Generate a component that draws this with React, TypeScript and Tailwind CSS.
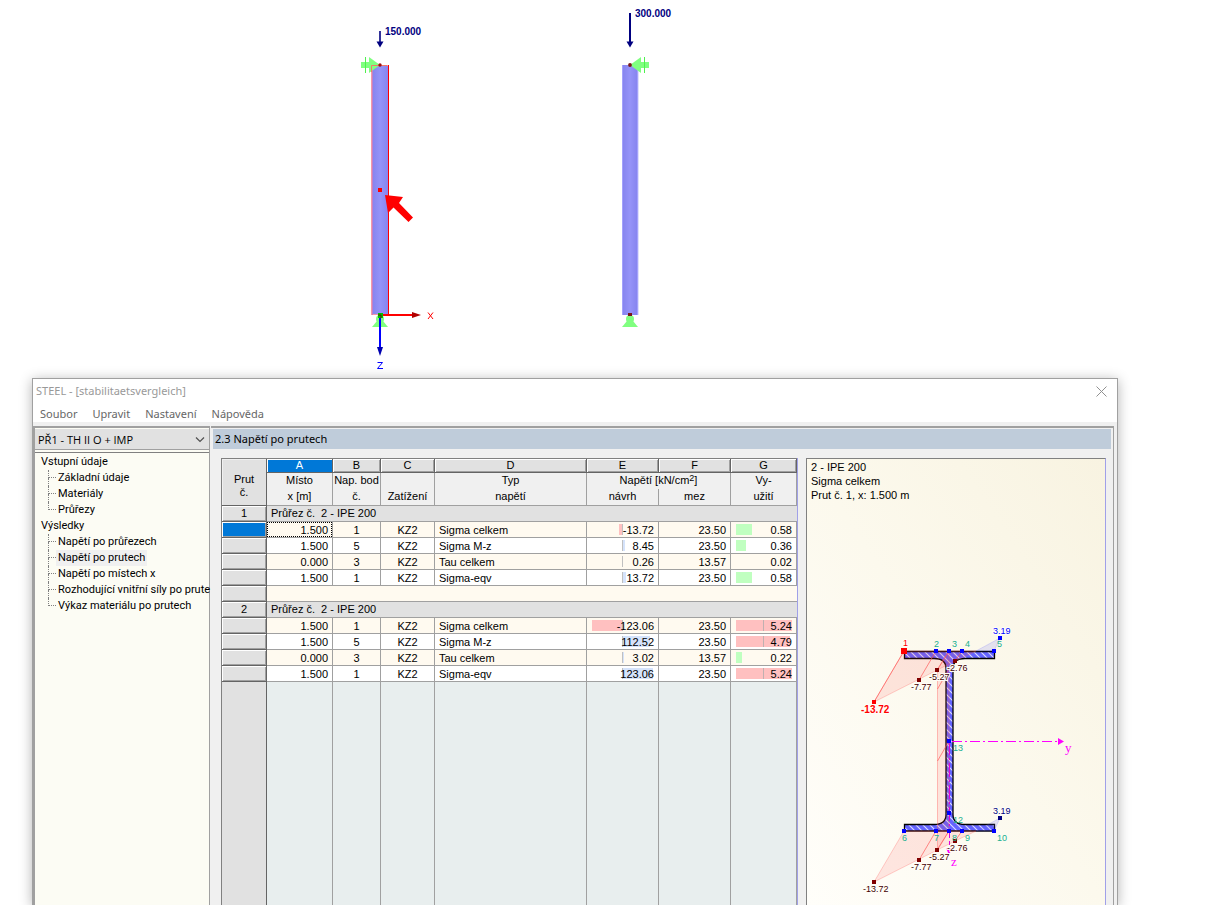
import type { ReactNode } from 'react';

type Row = {
  place: string;
  point: string;
  type: string;
  stress: number;
  limit: string;
  ratio: number;
};

const rows: Row[][] = [
  [
    { place: '1.500', point: '1', type: 'Sigma celkem', stress: -13.72, limit: '23.50', ratio: 0.58 },
    { place: '1.500', point: '5', type: 'Sigma M-z', stress: 8.45, limit: '23.50', ratio: 0.36 },
    { place: '0.000', point: '3', type: 'Tau celkem', stress: 0.26, limit: '13.57', ratio: 0.02 },
    { place: '1.500', point: '1', type: 'Sigma-eqv', stress: 13.72, limit: '23.50', ratio: 0.58 },
  ],
  [
    { place: '1.500', point: '1', type: 'Sigma celkem', stress: -123.06, limit: '23.50', ratio: 5.24 },
    { place: '1.500', point: '5', type: 'Sigma M-z', stress: 112.52, limit: '23.50', ratio: 4.79 },
    { place: '0.000', point: '3', type: 'Tau celkem', stress: 3.02, limit: '13.57', ratio: 0.22 },
    { place: '1.500', point: '1', type: 'Sigma-eqv', stress: 123.06, limit: '23.50', ratio: 5.24 },
  ],
];

const tree = [
  { title: 'Vstupní údaje', items: ['Základní údaje', 'Materiály', 'Průřezy'] },
  {
    title: 'Výsledky',
    items: [
      'Napětí po průřezech',
      'Napětí po prutech',
      'Napětí po místech x',
      'Rozhodující vnitřní síly po prute',
      'Výkaz materiálu po prutech',
    ],
  },
];

function Scene() {
  return (
    <svg className="block h-[378px] w-[360px]" viewBox="340 0 360 378" role="img" aria-label="Model">
      <defs>
        <linearGradient id="bar" x1="0" x2="1" y1="0" y2="0">
          <stop offset="0" stopColor="#8583ee" />
          <stop offset="0.5" stopColor="#9593f8" />
          <stop offset="1" stopColor="#8583ee" />
        </linearGradient>
      </defs>
      <rect x="372" y="65" width="17" height="250" fill="url(#bar)" />
      <path d="M371.500 315V65.500H388M371 314.500h17" fill="none" stroke="#f59aa8" />
      <path d="M372.500 315V66" stroke="#c080c8" />
      <path d="M388.500 65V315" stroke="#ff0000" />
      <rect x="622" y="65" width="16" height="250" fill="url(#bar)" />
      <path d="M622.500 65V315M637.500 65V315" stroke="#a3a1fb" />
      <path d="M638.500 66V315" stroke="#e0e0fc" />

      <path d="M361 62h8v-5l11 8-11 8v-5h-8z" fill="#80ff80" />
      <path d="M365.500 57v16" stroke="#50f050" />
      <path d="M371.500 72V65.500H387" fill="none" stroke="#f07a6c" />
      <path d="M649 62h-8v-5l-11 8 11 8v-5h8z" fill="#80ff80" />
      <path d="M644.500 57v16" stroke="#50f050" />
      <circle cx="380" cy="65" r="1.7" fill="#a01010" />
      <circle cx="630" cy="65" r="1.9" fill="#781818" />

      <path d="M380 31v12" stroke="#000080" strokeWidth="1.600" />
      <path d="M376.500 41.500h7l-3.500 6z" fill="#000080" />
      <path d="M630 13v30" stroke="#000080" strokeWidth="2" />
      <path d="M626.500 41.500h7l-3.500 6z" fill="#000080" />
      <g fill="#000080" fontFamily="'Liberation Sans', Arial, sans-serif" fontSize="10" fontWeight="700">
        <text x="385" y="35">150.000</text>
        <text x="635" y="17">300.000</text>
      </g>

      <g fill="#80ff80">
        <circle cx="380" cy="319" r="4" />
        <path d="M377 321h6l5 6h-16z" />
        <circle cx="630" cy="319" r="4" />
        <path d="M627 321h6l5 6h-16z" />
      </g>
      <rect x="628" y="313" width="4" height="3" fill="#781818" />
      <path d="M380 315h34" stroke="#ff0000" strokeWidth="2" />
      <path d="M412 312l9 3-9 3z" fill="#b00000" />
      <path d="M380 315v34" stroke="#0000ff" strokeWidth="2" />
      <path d="M377 347h6l-3 9z" fill="#0000b0" />
      <rect x="378" y="313" width="5" height="5" fill="#00c000" />
      <path d="M378 315h3v3" fill="none" stroke="#602000" />
      <path d="M428 312.500l5 6.500M433 312.500l-5 6.500" stroke="#ff0000" />
      <path d="M377.500 362.500h5l-5 6h5.500" fill="none" stroke="#0000ff" />

      <rect x="378" y="188" width="4" height="4" fill="#ff0000" />
      <path d="M385 195l18 2-4 6 14 14.500-4.500 4.500-15-14.500-5.500 5.500z" fill="#ff0000" />
    </svg>
  );
}

const nodePositions = [936, 949, 962, 994];

function Section() {
  return (
    <svg className="block h-[402px] w-[298px] shrink-0" viewBox="807 503 298 402" role="img" aria-label="IPE 200">
      <defs>
        <pattern id="hatch" width="7" height="7" patternUnits="userSpaceOnUse">
          <path d="M-1 -1l9 9M-1 6l2 2M6 -1l2 2" stroke="#dcdcff" strokeWidth="1.1" />
        </pattern>
        <path
          id="profile"
          d="M904.500 651.500h90v7H965q-12 0-12 10v146q0 10 12 10h29.500v6.500h-90v-6.500H934q12 0 12-10V668.500q0-10-12-10h-29.500z"
        />
      </defs>
      <use href="#profile" fill="#6464ff" />
      <use href="#profile" fill="url(#hatch)" stroke="#000000" strokeWidth="1.3" />

      <path d="M904 651l-30 51 81-41 21-10z" fill="#ff4040" fillOpacity=".12" stroke="#ff6060" strokeOpacity=".3" />
      <path d="M976 651l24-13-6 13z" fill="#6060ff" fillOpacity=".15" stroke="#6060ff" strokeOpacity=".2" />
      <path d="M904 831l-30 51 81-41 21-10z" fill="#ff4040" fillOpacity=".12" stroke="#ff6060" strokeOpacity=".3" />
      <path d="M976 831l24-13-6 13z" fill="#6060ff" fillOpacity=".15" stroke="#6060ff" strokeOpacity=".2" />
      <path d="M949 651l-11.500 19v180l11.500-19z" fill="#ff4040" fillOpacity=".12" stroke="#ff6060" strokeOpacity=".4" />
      <path
        d="M904 651l-30 51M936 651l-17 29M949 651l-12 19M962 651l-7 10M949 669l-11.500 20M949 741l-11.500 20M936 831l-17 29M949 831l-12 19M962 831l-7 10"
        stroke="#ff5050"
        strokeOpacity=".65"
      />

      <path d="M949.500 741V838M949.500 841v4" stroke="#e000e0" strokeDasharray="14 3 2 3" />
      <path d="M952 741.500H1058" stroke="#ff00ff" strokeDasharray="10 3 2 3" />
      <path d="M1058 738l6 3.500-6 3.500z" fill="#ff00ff" />
      <path d="M946 848h6l-3 7z" fill="#ff00ff" />

      <g fill="#0000ff">
        {nodePositions.map((x) => (
          <rect key={x} x={x - 2} y="649" width="4" height="4" />
        ))}
        {[904, ...nodePositions].map((x) => (
          <rect key={x} x={x - 2} y="829" width="4" height="4" />
        ))}
        <rect x="947" y="739" width="4" height="4" />
        <rect x="947" y="811" width="4" height="4" />
        <rect x="998" y="636" width="4" height="4" />
      </g>
      <rect x="998" y="816" width="4" height="4" fill="#000080" />
      <rect x="901" y="648" width="6" height="6" fill="#ff0000" />
      <rect x="872" y="700" width="4" height="4" fill="#ff0000" />
      <g fill="#800000">
        <rect x="917" y="678" width="4" height="4" />
        <rect x="935" y="668" width="4" height="4" />
        <rect x="953" y="659" width="4" height="4" />
        <rect x="872" y="880" width="4" height="4" />
        <rect x="917" y="858" width="4" height="4" />
        <rect x="935" y="848" width="4" height="4" />
        <rect x="953" y="839" width="4" height="4" />
      </g>

      <g
        fontFamily="'Liberation Sans', Arial, sans-serif"
        fontSize="9"
        fill="#20b090"
        stroke="#fffdf8"
        strokeWidth="2"
        paintOrder="stroke"
      >
        <g strokeWidth="0">
          <text x="934" y="647">2</text>
          <text x="952" y="647">3</text>
          <text x="965" y="647">4</text>
          <text x="997" y="647">5</text>
          <text x="953" y="751">13</text>
          <text x="953" y="823">12</text>
          <text x="902" y="841">6</text>
          <text x="934" y="841">7</text>
          <text x="952" y="841">8</text>
          <text x="965" y="841">9</text>
          <text x="997" y="841">10</text>
        </g>
        <text x="903" y="646" fill="#ff0000">1</text>
        <g fill="#400000">
          <text x="947" y="671">-2.76</text>
          <text x="929" y="680">-5.27</text>
          <text x="911" y="690">-7.77</text>
          <text x="947" y="851">-2.76</text>
          <text x="929" y="860">-5.27</text>
          <text x="911" y="870">-7.77</text>
          <text x="863" y="892">-13.72</text>
        </g>
        <text x="861" y="713" fill="#ff0000" fontSize="10" fontWeight="700">-13.72</text>
        <text x="993" y="634" fill="#0000ff">3.19</text>
        <text x="993" y="814" fill="#000080">3.19</text>
      </g>
      <g fill="#ff00ff" fontFamily="'Liberation Serif', 'Times New Roman', serif" fontSize="13">
        <text x="1065" y="752">y</text>
        <text x="951" y="866">z</text>
      </g>
    </svg>
  );
}

function Raised({ children, selected, label }: { children?: ReactNode; selected?: boolean; label?: string }) {
  return (
    <th
      scope="row"
      aria-label={label}
      className={
        selected
          ? 'h-4 border-r border-b border-[#646464] bg-[#0078d7] p-0 shadow-[inset_1px_1px_0_#fff,inset_-1px_-1px_0_#a0a0a0]'
          : 'h-4 border-r border-b border-[#646464] bg-[#e1e1e1] p-0 text-center font-normal shadow-[inset_1px_1px_0_#fff,inset_-1px_-1px_0_#a0a0a0]'
      }
    >
      {children}
    </th>
  );
}

const cell = 'h-4 border-r border-b border-[#a0a0a0] p-0 pt-px leading-[14px] ';

function ResultRow({ row, index, selected }: { row: Row; index: number; selected: boolean }) {
  const stressWidth = Math.round((Math.abs(row.stress) / 123.06) * 30);
  const ratioWidth = row.ratio > 1 ? Math.round(28 + (row.ratio / 5.24) * 28) : Math.round(row.ratio * 28);
  return (
    <tr className={index % 2 ? 'bg-white' : 'bg-[#fffaf0]'}>
      <Raised selected={selected} label={row.type} />
      <td className={cell + 'relative pr-1 text-right'}>
        {selected && <span className="absolute inset-0 border border-dotted border-black" />}
        {row.place}
      </td>
      <td className={cell + 'text-center'}>{row.point}</td>
      <td className={cell + 'text-center'}>KZ2</td>
      <td className={cell + 'pl-1'}>{row.type}</td>
      <td className={cell + 'relative pr-1 text-right'}>
        <span
          className={
            row.stress < 0
              ? 'absolute top-[2px] right-9 h-[11px] bg-[#ffc0c0]'
              : 'absolute top-[2px] left-9 h-[11px] bg-[#d5e3fb]'
          }
          style={{ width: stressWidth }}
        />
        <span className="absolute top-[2px] left-[35px] h-[11px] w-px bg-[#c0c0c0]" />
        <span className="relative">{row.stress.toFixed(2)}</span>
      </td>
      <td className={cell + 'pr-1 text-right'}>{row.limit}</td>
      <td className={cell + 'relative pr-1 text-right'}>
        {row.ratio > 0.1 && (
          <span
            className={
              row.ratio > 1
                ? 'absolute top-[2px] left-[5px] h-[11px] bg-[#ffc0c0]'
                : 'absolute top-[2px] left-[5px] h-[11px] bg-[#c0ffc0]'
            }
            style={{ width: ratioWidth }}
          />
        )}
        {row.ratio > 1 && <span className="absolute top-[2px] left-8 h-[11px] w-px bg-[#c0b0b0]" />}
        <span className="relative">{row.ratio.toFixed(2)}</span>
      </td>
    </tr>
  );
}

function Results() {
  const letters = ['A', 'B', 'C', 'D', 'E', 'F', 'G'];
  const head = 'border-r border-[#a0a0a0] p-0 align-top leading-[14px] font-normal ';
  return (
    <table className="h-full w-full table-fixed border-separate border-spacing-0 border-t border-l border-[#808080] bg-[#f0f0f0] font-['Liberation_Sans',Arial,sans-serif] text-[11px] leading-[15px]">
      <colgroup>
        <col className="w-[45px]" />
        <col className="w-[66px]" />
        <col className="w-[48px]" />
        <col className="w-[54px]" />
        <col />
        <col className="w-[72px]" />
        <col className="w-[72px]" />
        <col className="w-[66px]" />
      </colgroup>
      <thead>
        <tr>
          <th
            rowSpan={3}
            className="border-r border-b border-[#646464] bg-[#e1e1e1] p-0 pt-2 leading-[13px] font-normal shadow-[inset_1px_1px_0_#f0f0f0]"
          >
            Prut
            <br />
            č.
          </th>
          {letters.map((l) => (
            <th
              key={l}
              className={
                l === 'A'
                  ? 'h-[14px] border-r border-b border-[#646464] bg-[#0078d7] p-0 leading-[13px] font-normal text-white shadow-[inset_1px_1px_0_#fff]'
                  : 'h-[14px] border-r border-b border-[#646464] bg-[#e1e1e1] p-0 leading-[13px] font-normal shadow-[inset_1px_1px_0_#fff,inset_-1px_-1px_0_#a0a0a0]'
              }
            >
              {l}
            </th>
          ))}
        </tr>
        <tr>
          <th className={head + 'h-4'}>Místo</th>
          <th className={head + 'h-4 whitespace-nowrap'}>Nap. bod</th>
          <th className={head + 'h-4'} />
          <th className={head + 'h-4'}>Typ</th>
          <th colSpan={2} className={head + 'h-4 whitespace-nowrap'}>
            Napětí [kN/cm<sup className="static align-[3px] text-[9px] leading-none">2</sup>]
          </th>
          <th className={head + 'h-4'}>Vy-</th>
        </tr>
        <tr>
          {['x [m]', 'č.', 'Zatížení', 'napětí', 'návrh', 'mez', 'užití'].map((t) => (
            <th key={t} className={head + 'h-[17px] border-b'}>
              {t}
            </th>
          ))}
        </tr>
      </thead>
      <tbody>
        {rows.map((group, g) => [
          <tr key={'t' + g}>
            <Raised>{g + 1}</Raised>
            <td
              colSpan={7}
              className="h-4 border-b border-[#a0a0a0] bg-[#e1e1e1] p-0 pl-1 whitespace-pre"
            >
              {'Průřez č.  2 - IPE 200'}
            </td>
          </tr>,
          ...group.map((row, i) => (
            <ResultRow key={g + '-' + i} row={row} index={i} selected={g === 0 && i === 0} />
          )),
          g === 0 && (
            <tr key="gap">
              <Raised label="–" />
              <td colSpan={7} className="h-4 border-b border-[#a0a0a0] bg-[#fffaf0] p-0" />
            </tr>
          ),
        ])}
        <tr className="h-full bg-[#e8eeee]">
          <td className="border-r border-[#646464] bg-[#e1e1e1] p-0" />
          {letters.map((l) => (
            <td key={l} className="border-r border-[#a0a0a0] p-0" />
          ))}
        </tr>
      </tbody>
    </table>
  );
}

function Sidebar() {
  return (
    <aside className="flex w-[177px] shrink-0 flex-col border-t-2 border-r border-l-2 border-[#a0a0a0] bg-[#fcfcf4]">
      <div className="relative mt-px h-[21px] shrink-0 border-b border-[#a0a0a0] bg-[#e1e1e1] pt-px">
        <select
          aria-label="Návrhový případ"
          className="h-5 w-full appearance-none bg-transparent pl-[3px] text-[11px] leading-5 outline-none"
        >
          <option>PŘ1 - TH II O + IMP</option>
        </select>
        <svg className="pointer-events-none absolute top-[7px] right-1 h-[7px] w-[10px]" viewBox="0 0 10 7" fill="none">
          <path d="M1 1.500l4 4 4-4" stroke="#505050" strokeWidth="1.2" />
        </svg>
      </div>
      <nav className="mt-[2px] flex-1 border-t border-[#808080] pt-px font-[Roboto,sans-serif] whitespace-nowrap">
        {tree.map((node) => (
          <section key={node.title}>
            <button className="block h-4 pl-[6px] leading-4">{node.title}</button>
            <ul className="pl-[13px]">
              {node.items.map((item, i) => (
                <li key={item} className="flex h-4">
                  <span className="flex w-2 shrink-0 flex-col">
                    <span className="h-2 border-b border-l border-dotted border-[#808080]" />
                    {i < node.items.length - 1 && <span className="h-2 border-l border-dotted border-[#808080]" />}
                  </span>
                  <button
                    className={item === 'Napětí po prutech' ? 'bg-[#f0f0f0] px-[2px] leading-4' : 'pl-[2px] leading-4'}
                  >
                    {item}
                  </button>
                </li>
              ))}
            </ul>
          </section>
        ))}
      </nav>
    </aside>
  );
}

export default function App() {
  return (
    <div className="flex h-screen flex-col overflow-hidden bg-white font-['Open_Sans','Noto_Sans',sans-serif] text-[11px] text-black">
      <div className="shrink-0 pl-[340px]">
        <Scene />
      </div>
      <main className="mr-[88px] ml-8 flex min-h-0 flex-1 flex-col border border-b-0 border-[#a0a0a0] bg-[#f0f0f0] shadow-[0_2px_12px_rgba(0,0,0,0.3)]">
        <header className="shrink-0 bg-white font-['Noto_Sans',sans-serif]">
          <div className="flex h-6 items-center justify-between pr-[10px] pl-[3px] text-[#999999]">
            <h1>STEEL - [stabilitaetsvergleich]</h1>
            <button aria-label="Zavřít">
              <svg className="h-[11px] w-[11px]" viewBox="0 0 11 11" stroke="#909090">
                <path d="M.5.5l10 10M10.500.5l-10 10" />
              </svg>
            </button>
          </div>
          <div className="flex h-[19px] items-start gap-[15px] pl-[7px] leading-[21px] text-[#666666]">
            {['Soubor', 'Upravit', 'Nastavení', 'Nápověda'].map((m) => (
              <button key={m}>{m}</button>
            ))}
          </div>
        </header>
        <div className="flex min-h-0 flex-1 pt-1">
          <Sidebar />
          <div className="mr-[3px] ml-px flex min-w-0 flex-1 flex-col border-t-2 border-r border-[#a0a0a0] pt-px pr-[2px] pl-[2px]">
            <h2 className="h-5 shrink-0 bg-[#bfccda] pl-[2px] font-['Noto_Sans',sans-serif] leading-[19px]">
              2.3 Napětí po prutech
            </h2>
            <div className="mt-[9px] flex min-h-0 flex-1 pr-[5px] pl-2">
              <div className="min-w-0 flex-1 border-r border-[#a0a0e8] bg-white">
                <Results />
              </div>
              <section className="ml-2 flex w-[300px] shrink-0 flex-col border-t border-r border-l border-t-[#808080] border-r-[#a0a0e8] border-l-[#808080] bg-linear-to-bl from-[#f8f3e1] via-[#fcf9ed] to-[#fffefa] font-['Liberation_Sans',Arial,sans-serif]">
                <div className="h-[44px] shrink-0 pt-px pl-1 leading-[14px]">
                  <p>2 - IPE 200</p>
                  <p>Sigma celkem</p>
                  <p>Prut č. 1, x: 1.500 m</p>
                </div>
                <Section />
              </section>
            </div>
          </div>
        </div>
      </main>
    </div>
  );
}
